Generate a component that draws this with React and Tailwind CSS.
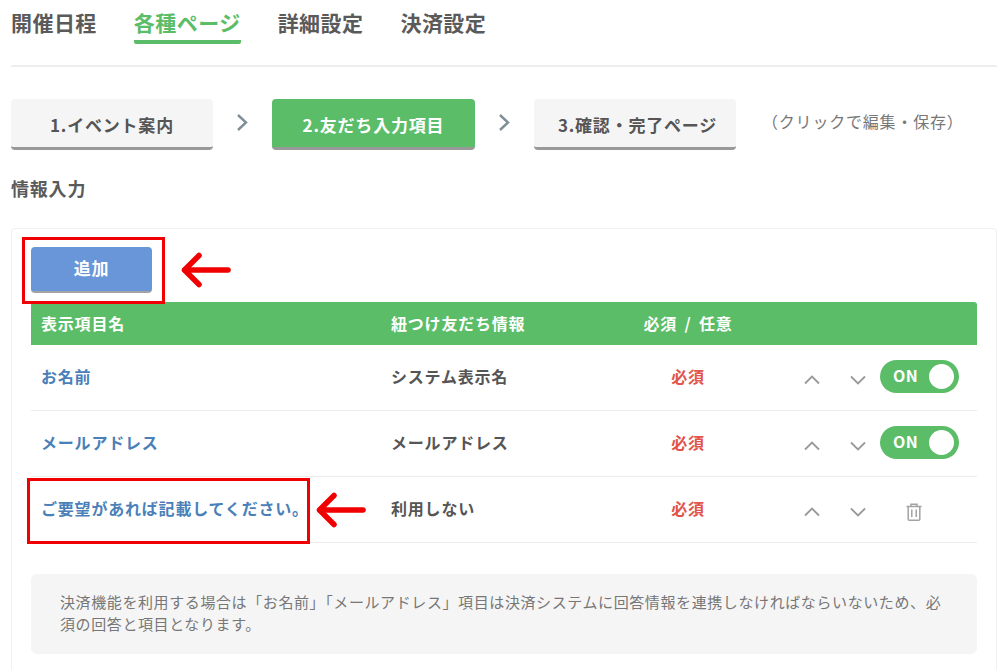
import React from 'react';

const FONT = 'font-["Noto_Sans_CJK_JP","Noto_Sans",sans-serif]';

function RedArrow({ className }) {
  return (
    <svg className={className} width="52" height="36" viewBox="0 0 52 36" fill="none" stroke="#f00000" strokeWidth="5.5" strokeLinecap="round" strokeLinejoin="round">
      <path d="M48 18H5" />
      <path d="M19 3.5L4.5 18L19 32.5" />
    </svg>
  );
}

function StepArrow() {
  return (
    <svg className="mx-[24px] mb-[5px] shrink-0" width="11" height="17" viewBox="0 0 11 17" fill="none" stroke="#7f8f97" strokeWidth="2.4">
      <path d="M1 1L9 8.5L1 16" />
    </svg>
  );
}

function Chevron({ down, className }) {
  return (
    <svg className={className} width="16" height="10" viewBox="0 0 16 10" fill="none" stroke="#999" strokeWidth="1.8">
      <path d={down ? 'M1 1.5L8 8.5L15 1.5' : 'M1 8.5L8 1.5L15 8.5'} />
    </svg>
  );
}

function TrashIcon({ className }) {
  return (
    <svg className={className} width="16" height="18" viewBox="0 0 16 18" fill="none" stroke="#a3a3a3" strokeWidth="1.5">
      <path d="M0.5 3.5H15.5" />
      <path d="M5 3.5V1.2H11V3.5" />
      <path d="M2.2 3.5V16.2Q2.2 17.2 3.2 17.2H12.8Q13.8 17.2 13.8 16.2V3.5" />
      <path d="M5.8 6.5V14M10.2 6.5V14" />
    </svg>
  );
}

function Toggle() {
  return (
    <div className="flex items-center justify-between w-[79px] h-[33px] mb-[7px] rounded-full bg-[#5bbd68] pl-[13px] pr-[5px]">
      <span className="text-white text-[16px] font-bold leading-none mb-[2px] tracking-[0.4px]">ON</span>
      <span className="w-[25px] h-[25px] rounded-full bg-white" />
    </div>
  );
}

function Row({ name, link, toggle }) {
  return (
    <div className="flex items-center h-[66px] border-b border-[#ececec]">
      <div className="w-[350px] pl-[10px] pb-[4px] text-[16px] font-bold text-[#4a7fb8] whitespace-nowrap">{name}</div>
      <div className="w-[225px] pl-[10px] pb-[4px] text-[16px] font-bold text-[#555] whitespace-nowrap">{link}</div>
      <div className="w-[164px] pb-[4px] text-center text-[16px] font-bold text-[#e0544b]">必須</div>
      <div className="flex items-center pl-[34px] pt-[4px]">
        <Chevron />
        <Chevron down className="ml-[30px]" />
        {toggle ? (
          <div className="ml-[14px]"><Toggle /></div>
        ) : (
          <TrashIcon className="ml-[40px]" />
        )}
      </div>
    </div>
  );
}

function Step({ label, active, shift }) {
  return (
    <div
      className={
        'flex items-center justify-center h-[51px] pt-[3px] rounded-[4px] border-b-[3px] border-[#999] text-[17px] font-bold whitespace-nowrap ' +
        (active ? 'w-[203px] bg-[#5bbd68] text-white' : 'w-[202px] bg-[#f5f5f5] text-[#555] ') +
        (shift ? ' pl-[5px]' : '')
      }
    >
      {label}
    </div>
  );
}

export default function App() {
  return (
    <div className={'w-[1000px] h-[670px] overflow-hidden bg-white pl-[11px] pr-[3px] tracking-[0.8px] ' + FONT}>
      <div className="flex gap-[37px] h-[67px] border-b-2 border-[#eeeeee] text-[21px] tracking-[0.45px] font-bold text-[#5a5a5a] leading-none pt-[12px]">
        <span>開催日程</span>
        <span className="h-[32px] border-b-[4px] border-[#5bbd68] rounded-b-[2px] text-[#5bbd68]">各種ページ</span>
        <span>詳細設定</span>
        <span>決済設定</span>
      </div>

      <div className="flex items-center mt-[32px]">
        <Step label="1.イベント案内" />
        <StepArrow />
        <Step label="2.友だち入力項目" active />
        <StepArrow />
        <Step label="3.確認・完了ページ" shift />
        <span className="ml-[26px] mb-[8px] text-[16px] text-[#777] whitespace-nowrap">（クリックで編集・保存）</span>
      </div>

      <div className="mt-[25px] text-[18px] font-bold text-[#5a5a5a] leading-[26px]">情報入力</div>

      <div className="relative mt-[27px] h-[460px] border border-[#f0f0f0] rounded-[4px] px-[19px] pt-[18px]">
        <div className="flex items-center justify-center w-[121px] h-[46px] pb-[3px] rounded-[4px] border-b-[2px] border-[#a3a3a3] bg-[#6896d8] text-white text-[17px] font-bold">追加</div>

        <div className="flex items-center h-[43px] mt-[9px] pb-[2px] bg-[#5bbd68] rounded-t-[3px] text-[16px] font-bold text-white">
          <div className="w-[350px] pl-[10px]">表示項目名</div>
          <div className="w-[225px] pl-[10px]">紐つけ友だち情報</div>
          <div className="w-[164px] text-center">必須 <span className="mx-[3px]">/</span> 任意</div>
        </div>

        <Row name="お名前" link="システム表示名" toggle />
        <Row name="メールアドレス" link="メールアドレス" toggle />
        <Row name="ご要望があれば記載してください。" link="利用しない" />

        <div className="mt-[31px] h-[80px] rounded-[6px] bg-[#f5f5f5] pl-[29px] pr-[28px] pt-[17px] text-[15px] tracking-[0.6px] leading-[22px] text-[#777]">
          決済機能を利用する場合は「お名前」「メールアドレス」項目は決済システムに回答情報を連携しなければならいないため、必須の回答と項目となります。
        </div>

        <div className="absolute left-[10px] top-[8px] w-[143px] h-[67px] border-[3px] border-[#f00000]" />
        <RedArrow className="absolute left-[168px] top-[23px]" />
        <div className="absolute left-[15px] top-[249px] w-[283px] h-[66px] border-[3px] border-[#f00000]" />
        <RedArrow className="absolute left-[303px] top-[263px]" />
      </div>
    </div>
  );
}
